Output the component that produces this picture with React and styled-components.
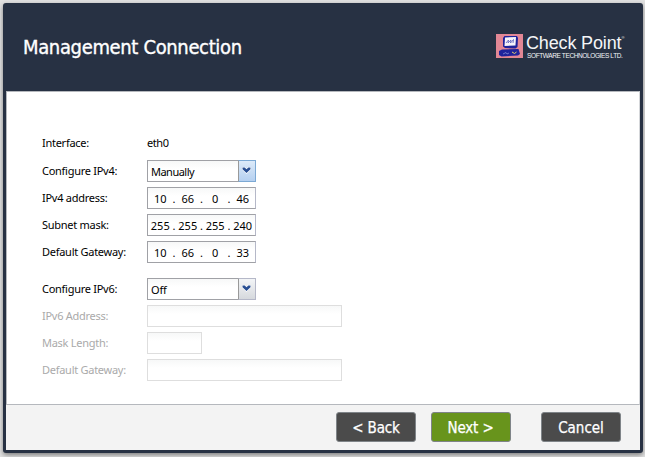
import React from "react";
import styled, { createGlobalStyle } from "styled-components";

const GlobalStyle = createGlobalStyle`
  * { box-sizing: border-box; }
  body {
    margin: 0;
    overflow: hidden;
    background: #e2e2e2;
    font-family: "Noto Sans", "DejaVu Sans", sans-serif;
  }
`;

const Page = styled.div`
  height: 457px;
  padding: 3px 2px 4px 3px;
`;

const Dialog = styled.main`
  width: 640px;
  height: 450px;
  padding: 0 3px 3px;
  display: flex;
  flex-direction: column;
  background: #273143;
  border-radius: 3px;
  box-shadow: 0 2px 5px rgba(0, 0, 0, 0.45);
`;

const Header = styled.header`
  height: 88px;
  flex: none;
  display: flex;
  justify-content: space-between;
  padding: 0 16px 0 17px;
`;

const Title = styled.h1`
  margin: 30px 0 0;
  font-family: "DejaVu Sans Condensed", "DejaVu Sans", sans-serif;
  font-stretch: condensed;
  font-size: 20px;
  line-height: 28px;
  font-weight: 400;
  letter-spacing: -0.35px;
  -webkit-text-stroke: 0.35px #fff;
  color: #fff;
  white-space: nowrap;
`;

const Brand = styled.div`
  display: flex;
  gap: 3px;
  margin-top: 31px;
  height: 24px;
  color: #f4f5f7;
`;

const BrandText = styled.div`
  width: 98px;
  font-family: "Liberation Sans", Arial, sans-serif;
  white-space: nowrap;
`;

const BrandName = styled.div`
  font-size: 18px;
  line-height: 18px;
  letter-spacing: -0.15px;
  display: flex;
`;

const Mark = styled.span`
  font-size: 4px;
  line-height: 8px;
`;

const BrandSub = styled.div`
  padding-left: 1px;
  font-size: 6.5px;
  line-height: 7px;
  letter-spacing: -0.38px;
`;

const Content = styled.section`
  height: 314px;
  flex: none;
  padding: 41px 0 0 35px;
  background: #fff;
  border: 1px solid #b5b8bd;
  border-right-color: #d5d7da;
`;

const Row = styled.div`
  display: flex;
  align-items: center;
  height: ${(p) => p.$height ?? 22}px;
  margin-bottom: ${(p) => p.$after ?? 5}px;
  font-size: 11px;
  color: ${(p) => (p.$disabled ? "#aaa" : "#000")};
`;

const Label = styled.label`
  width: 105px;
  padding-bottom: 2px;
  letter-spacing: -0.27px;
  white-space: nowrap;
`;

const Value = styled.span`
  padding-bottom: 2px;
  letter-spacing: -0.4px;
`;

const Field = styled.div`
  width: ${(p) => p.$width}px;
  height: 22px;
  display: flex;
  border: 1px solid ${(p) => (p.$disabled ? "#dedede" : "#a0a1a6")};
  border-right-color: ${(p) => (p.$disabled ? "#dedede" : "#b5b8c8")};
  background: linear-gradient(#f7f8f8, #fff 8px);
`;

const Octet = styled.span`
  width: 25px;
  line-height: 22px;
  text-align: center;
`;

const Dot = styled.span`
  width: 3px;
  line-height: 22px;
  text-align: center;
`;

const ComboText = styled.span`
  flex: 1;
  padding-left: 3px;
  line-height: 22px;
  letter-spacing: ${(p) => p.$track ?? -0.52}px;
`;

const Trigger = styled.button`
  width: 18px;
  height: 22px;
  margin: -1px -1px 0 0;
  padding: 0 2px 1px 0;
  display: grid;
  place-items: center;
  border: 1px solid ${(p) => (p.$active ? "#7ca9d4" : "#b5b8c8")};
  border-left-color: #999;
  background: ${(p) =>
    p.$active ? "linear-gradient(#dceaf9, #b5d0f0)" : "linear-gradient(#f3f5f7, #d6d9dd)"};
`;

const Footer = styled.footer`
  flex: 1;
  display: flex;
  justify-content: flex-end;
  padding: 7px 19px 0 0;
  background: #f3f3f3;
`;

const Button = styled.button`
  width: 80px;
  height: 30px;
  margin-left: ${(p) => p.$before ?? 15}px;
  padding: 2px ${(p) => p.$shift ?? 0}px 0 0;
  border: 1px solid #7f8488;
  border-radius: 3px;
  background: ${(p) => (p.$primary ? "#68941c" : "#4b4b4b")};
  color: #fff;
  font-family: "DejaVu Sans Condensed", "DejaVu Sans", sans-serif;
  font-stretch: condensed;
  font-size: 15px;
  letter-spacing: ${(p) => p.$track ?? -0.15}px;
  -webkit-text-stroke: 0.25px #fff;
  white-space: nowrap;
`;

const Chevron = () => (
  <svg width="9" height="7" viewBox="0 0 9 7">
    <path d="M0 0h3l1.5 1.5L6 0h3v2.5L4.5 7 0 2.5z" fill="#fff" />
    <path d="M.5 .5h2.200l1.800 1.800L6.300 .5h2.200v1.700l-4 3.800-4-3.800z" fill="#294f93" />
  </svg>
);

const Emblem = () => (
  <svg width="27" height="24" viewBox="0 0 27 24">
    <path fill="#e28795" d="M0 0h27v24H0z" />
    <path fill="#1e239b" d="M7 4l1.500-2 12.500 0 1 2-.5 9-2 1.500-10.500-.5-2-1.500z" />
    <path fill="#f5f3fa" d="M9 3.500L20 3l-.5 8.500L8.500 12z" />
    <path d="M10 9l2.500-3-.5 3 3-3-.5 3 3-3.500-.5 3.500" fill="none" stroke="#5960bd" strokeWidth=".8" />
    <path fill="#1e239b" d="M3 17l3-1.500 16.500-.5 1.500 5-2 1.500-16.500 1-2.500-1.500z" />
    <path d="M7 20l3-1.500 1 1.500 2-1" fill="none" stroke="#8288d2" strokeWidth=".8" />
    <path d="M16 18l2.500 1.500 2-1.500" fill="none" stroke="#e2cc6a" />
  </svg>
);

const IpField = ({ value }) => (
  <Field $width={109}>
    {value.split(".").map((part, i) => (
      <React.Fragment key={i}>
        {i > 0 && <Dot>.</Dot>}
        <Octet>{part}</Octet>
      </React.Fragment>
    ))}
  </Field>
);

const Combo = ({ value, active, track }) => (
  <Field $width={109}>
    <ComboText $track={track}>{value}</ComboText>
    <Trigger $active={active} aria-label="Open list">
      <Chevron />
    </Trigger>
  </Field>
);

export default function App() {
  return (
    <>
      <GlobalStyle />
      <Page>
        <Dialog>
          <Header>
            <Title>Management Connection</Title>
            <Brand>
              <Emblem />
              <BrandText>
                <BrandName>Check Point<Mark>®</Mark></BrandName>
                <BrandSub>SOFTWARE TECHNOLOGIES LTD.</BrandSub>
              </BrandText>
            </Brand>
          </Header>
          <Content>
            <Row $height={20} $after={7}>
              <Label>Interface:</Label>
              <Value>eth0</Value>
            </Row>
            <Row>
              <Label>Configure IPv4:</Label>
              <Combo value="Manually" active />
            </Row>
            <Row>
              <Label>IPv4 address:</Label>
              <IpField value="10.66.0.46" />
            </Row>
            <Row>
              <Label>Subnet mask:</Label>
              <IpField value="255.255.255.240" />
            </Row>
            <Row $after={15}>
              <Label>Default Gateway:</Label>
              <IpField value="10.66.0.33" />
            </Row>
            <Row>
              <Label>Configure IPv6:</Label>
              <Combo value="Off" track={-0.2} />
            </Row>
            <Row $disabled>
              <Label>IPv6 Address:</Label>
              <Field $width={195} $disabled />
            </Row>
            <Row $disabled>
              <Label>Mask Length:</Label>
              <Field $width={55} $disabled />
            </Row>
            <Row $disabled>
              <Label>Default Gateway:</Label>
              <Field $width={195} $disabled />
            </Row>
          </Content>
          <Footer>
            <Button>&lt; Back</Button>
            <Button $primary $shift={1}>Next &gt;</Button>
            <Button $before={30} $track={0}>Cancel</Button>
          </Footer>
        </Dialog>
      </Page>
    </>
  );
}
